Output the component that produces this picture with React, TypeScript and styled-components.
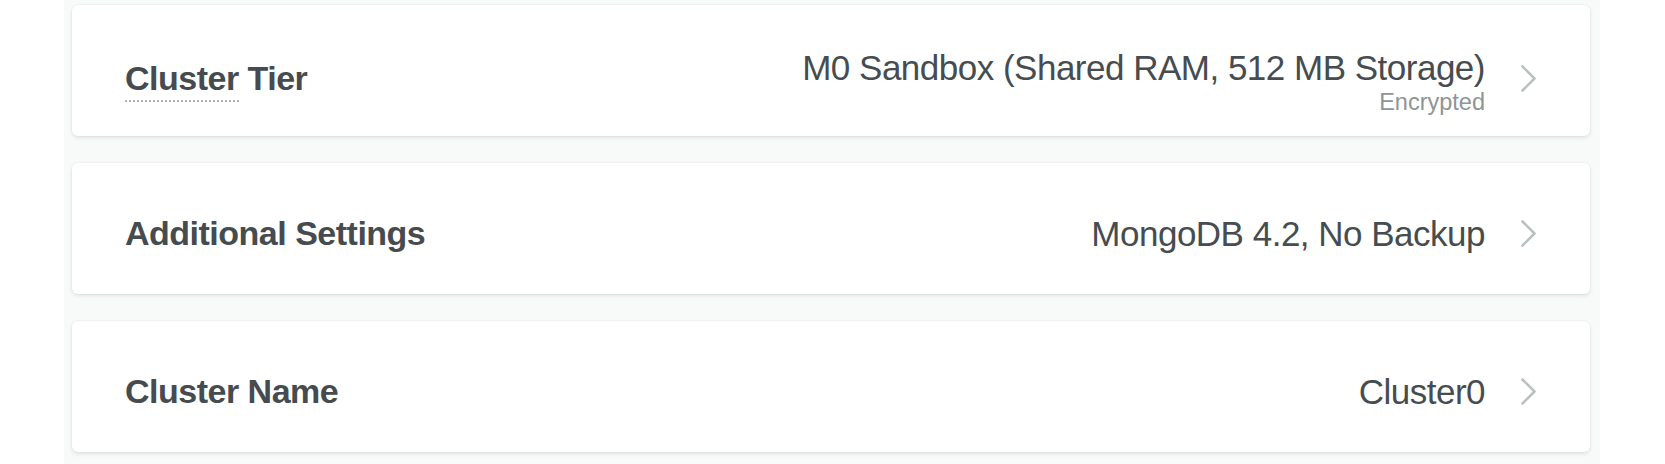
import React from "react";
import styled, { createGlobalStyle } from "styled-components";

const GlobalStyle = createGlobalStyle`
  html, body {
    margin: 0;
    padding: 0;
    background: #ffffff;
    font-family: "Liberation Sans", Arial, sans-serif;
  }
`;

const Panel = styled.div`
  margin-left: 64px;
  width: 1536px;
  height: 464px;
  box-sizing: border-box;
  background: #f8f9f9;
  padding: 5px 10px 0 8px;
  display: flex;
  flex-direction: column;
  gap: 27px;
  overflow: hidden;
`;

const Card = styled.div<{ $withSub?: boolean }>`
  height: 131px;
  flex-shrink: 0;
  box-sizing: border-box;
  background: #ffffff;
  border-radius: 6px;
  box-shadow: 0 2px 4px rgba(0, 0, 0, 0.09), 0 0 0 1px rgba(0, 0, 0, 0.025);
  display: flex;
  align-items: center;
  padding: ${(p) => (p.$withSub ? "15px" : "10px")} 53px 0 53px;
  cursor: pointer;
`;

const Label = styled.div`
  flex: 1;
  font-size: 34px;
  letter-spacing: -0.5px;
  font-weight: 700;
  color: #454b4e;
  white-space: nowrap;
`;

const Dotted = styled.span`
  padding-bottom: 3px;
  border-bottom: 2px dotted #aeb4b4;
`;

const Value = styled.div<{ $withSub?: boolean }>`
  display: flex;
  flex-direction: column;
  align-items: flex-end;
  text-align: right;
  margin-top: ${(p) => (p.$withSub ? "6px" : "0")};
`;

const Main = styled.div`
  font-size: 35px;
  letter-spacing: -0.5px;
  color: #464c4f;
  line-height: 40px;
  white-space: nowrap;
`;

const Sub = styled.div`
  font-size: 23.5px;
  color: #8d9597;
  line-height: 24px;
  margin-top: 2px;
`;

const Chevron = styled.svg`
  width: 17px;
  height: 29px;
  margin-left: 35px;
  flex-shrink: 0;
`;

const Arrow = () => (
  <Chevron viewBox="0 0 17 29" fill="none">
    <polyline
      points="2.5,2.5 14.5,14.5 2.5,26.5"
      stroke="#bac1c1"
      strokeWidth="2.6"
      strokeLinecap="round"
      strokeLinejoin="round"
    />
  </Chevron>
);

type Row = {
  label: React.ReactNode;
  value: string;
  sub?: string;
};

const rows: Row[] = [
  {
    label: (
      <>
        <Dotted>Cluster</Dotted> Tier
      </>
    ),
    value: "M0 Sandbox (Shared RAM, 512 MB Storage)",
    sub: "Encrypted",
  },
  { label: "Additional Settings", value: "MongoDB 4.2, No Backup" },
  { label: "Cluster Name", value: "Cluster0" },
];

export default function App() {
  return (
    <>
      <GlobalStyle />
      <Panel>
        {rows.map((r, i) => (
          <Card key={i} $withSub={!!r.sub}>
            <Label>{r.label}</Label>
            <Value $withSub={!!r.sub}>
              <Main>{r.value}</Main>
              {r.sub && <Sub>{r.sub}</Sub>}
            </Value>
            <Arrow />
          </Card>
        ))}
      </Panel>
    </>
  );
}
